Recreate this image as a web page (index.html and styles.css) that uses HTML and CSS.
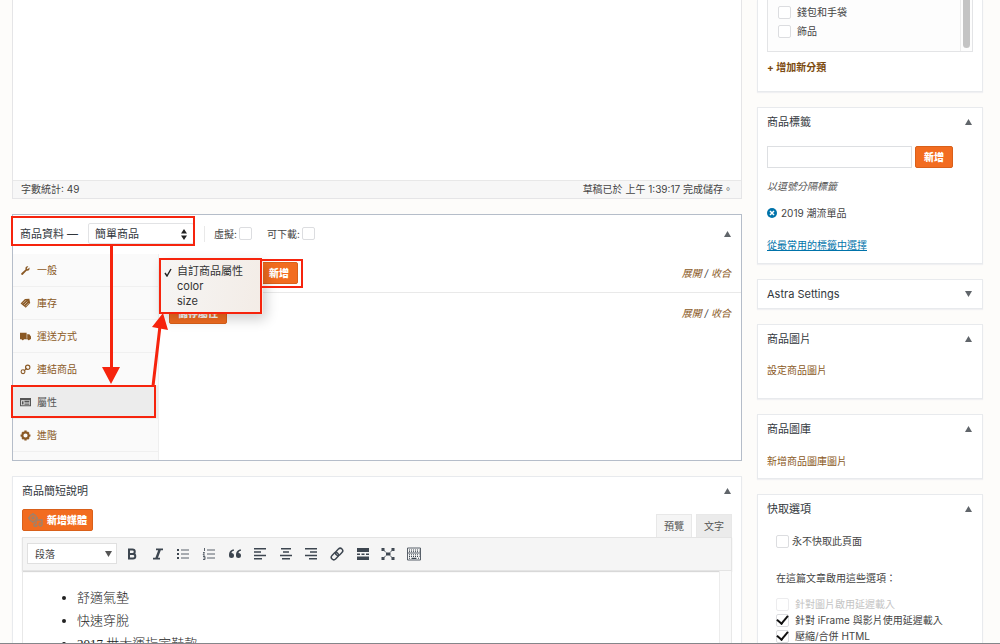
FILE: index.html
```html
<!DOCTYPE html>
<html lang="zh-Hant">
<head>
<meta charset="utf-8">
<meta name="viewport" content="width=device-width, initial-scale=1">
<title>商品資料</title>
<link rel="stylesheet" href="styles.css">
</head>
<body>
<div class="screen">
  <main class="main-column">
    <section class="editor">
      <div class="editor-area"></div>
      <div class="editor-status"><span>字數統計: 49</span><span>草稿已於 上午 1:39:17 完成儲存。</span></div>
    </section>

    <section class="product-data">
      <header class="product-header">
        <label class="product-title" for="product-type">商品資料 —</label>
        <div class="type-picker">
          <select id="product-type" class="type-select"><option>簡單商品</option></select>
          <svg class="type-arrows" viewBox="0 0 6 11"><path d="M3 0 6 4.500H0zM3 11 0 6.500h6z"/></svg>
        </div>
        <div class="type-options">
          <label class="type-option">虛擬:<input class="check" type="checkbox"></label>
          <label class="type-option">可下載:<input class="check" type="checkbox"></label>
        </div>
        <button class="toggle" type="button" aria-label="收合"><svg class="toggle-icon" viewBox="0 0 7 6"><path d="M3.500 0 7 6H0z"/></svg></button>
      </header>
      <div class="product-body">
        <nav class="tabs">
          <a class="tab" href="#"><svg class="tab-icon" viewBox="0 0 20 20"><path d="M17 4.500 14 7.500 12.200 5.700l3-3C12.500 1.600 9 4 10 8L2.500 15.200c-1.500 1.700 1 4 2.500 2.500L12 10.500c4 1 6.500-2.500 5-6z"/></svg>一般</a>
          <a class="tab" href="#"><svg class="tab-icon" viewBox="0 0 20 20"><path d="M1 10 9 2l8-.5L18.500 9l-8 8.500z"/><path class="tab-cut" d="m5 10 6-6M7.500 12.500l6-6M10 15l5.500-5.500"/></svg>庫存</a>
          <a class="tab" href="#"><svg class="tab-icon" viewBox="0 0 20 20"><path d="M0 3h12v3h5l3 4v5h-2a2 2 0 0 1-4 0H7a2 2 0 0 1-4 0H0z"/><path class="tab-cut" d="M12.500 6v8"/></svg>運送方式</a>
          <a class="tab" href="#"><svg class="tab-icon" viewBox="0 0 20 20"><g class="tab-line"><circle cx="14" cy="6" r="4"/><circle cx="5.500" cy="14" r="3.500"/><path d="m7 13 6-6"/></g></svg>連結商品</a>
          <a class="tab tab-active" href="#"><svg class="tab-icon" viewBox="0 0 20 20"><path fill-rule="evenodd" d="M0 2h20v15H0zM2 6v9h16V6z"/><path d="M3.500 7.500h3v6h-3zM8 7h9v2H8zm0 3h9v2H8zm0 3h9v1.500H8z"/></svg>屬性</a>
          <a class="tab" href="#"><svg class="tab-icon" viewBox="0 0 20 20"><path fill-rule="evenodd" d="m8 1h4l.5 2.500 2-1 2.800 2.800-1.200 2.200L19 8v4l-2.700.5 1.200 2.200-2.800 2.800-2.200-1.200L12 19H8l-.5-2.700-2.200 1.200-2.800-2.800 1.200-2.200L1 12V8l2.700-.5-1.200-2.200 2.800-2.800 2.200 1zM10 6.200a3.800 3.800 0 1 0 0 7.600 3.800 3.800 0 0 0 0-7.600z"/></svg>進階</a>
        </nav>
        <div class="attributes">
          <div class="attribute-row attribute-row-top">
            <div class="attribute-picker">
              <ul class="menu" role="listbox">
                <li class="menu-item" role="option" aria-selected="true"><svg class="menu-tick" viewBox="0 0 8 9"><path d="m1 5 2 3 4-7"/></svg>自訂商品屬性</li>
                <li class="menu-item" role="option">color</li>
                <li class="menu-item" role="option">size</li>
              </ul>
            </div>
            <button class="button" type="button">新增</button>
            <span class="expand"><a class="link" href="#">展開</a> / <a class="link" href="#">收合</a></span>
          </div>
          <div class="attribute-row">
            <button class="button" type="button">儲存屬性</button>
            <span class="expand"><a class="link" href="#">展開</a> / <a class="link" href="#">收合</a></span>
          </div>
        </div>
      </div>
      <svg class="callouts" viewBox="8 214 300 208">
        <g class="callout-line">
          <path d="M12 217h182v28H12zM12 386h143v31H12zM160 259h101v54H160zM262 260h40v27h-40"/>
          <path class="callout-shaft" d="M111.500 246v124M153 386l7-60"/>
        </g>
        <path class="callout-head" d="M102 367h18l-9 17zM163 313l5 17-16-3z"/>
      </svg>
    </section>

    <section class="panel excerpt">
      <header class="panel-header"><h2 class="panel-title">商品簡短說明</h2><button class="toggle" type="button" aria-label="收合"><svg class="toggle-icon" viewBox="0 0 7 6"><path d="M3.500 0 7 6H0z"/></svg></button></header>
      <div class="excerpt-body">
        <div class="excerpt-top">
          <button class="button media-button" type="button"><svg class="media-icon" viewBox="0 0 16 14"><g><circle cx="5" cy="5" r="3.500"/><circle cx="5" cy="5" r="1"/><path d="M5 0v2M5 8v2M0 5h2M8 5h2M9 12a1.500 1.500 0 1 1-1-1.500V7h6v4M14 11a1.500 1.500 0 1 1-1-1"/></g></svg>新增媒體</button>
          <div class="modes"><button class="mode mode-active" type="button">預覽</button><button class="mode" type="button">文字</button></div>
        </div>
        <div class="toolbar">
          <div class="format-picker"><select class="format-select" aria-label="格式"><option>段落</option></select><svg class="format-arrow" viewBox="0 0 7 6"><path d="M0 0h7L3.500 6z"/></svg></div>
          <div class="tools">
            <button class="tool" type="button" aria-label="粗體"><svg class="tool-icon" viewBox="0 0 14 14"><path class="tool-stroke" d="M4 2.500h3.500a2.200 2.200 0 0 1 0 4.500H4zm0 4.500h4a2.300 2.300 0 0 1 0 4.600H4z"/></svg></button>
            <button class="tool" type="button" aria-label="斜體"><svg class="tool-icon" viewBox="0 0 14 14"><path d="M5 1.500h7v1.700H9.800L7 10.800h2v1.700H2v-1.700h2.400l2.800-7.600H5z"/></svg></button>
            <button class="tool" type="button" aria-label="項目清單"><svg class="tool-icon" viewBox="0 0 14 14"><path d="M1 2h2v2H1zm0 4h2v2H1zm0 4h2v2H1z"/><path class="tool-thin" d="M5 3h8M5 7h8M5 11h8"/></svg></button>
            <button class="tool" type="button" aria-label="編號清單"><svg class="tool-icon" viewBox="0 0 14 14"><path class="tool-thin" d="M2.500 1v3M1 5.500h1.500L1 8h2M1 9.500h2v3H1M1.500 11H3M5 3h8M5 7h8M5 11h8"/></svg></button>
            <button class="tool" type="button" aria-label="引用"><svg class="tool-icon" viewBox="0 0 14 14"><path d="M6 2.500C2.500 2.500 1 5 1 8.500a2.500 2.500 0 1 0 2.500-2.500C3.600 4.800 4.500 4 6 3.800zM13 2.500c-3.500 0-5 2.500-5 6A2.500 2.500 0 1 0 10.500 6c.1-1.200 1-2 2.500-2.200z"/></svg></button>
            <button class="tool" type="button" aria-label="靠左"><svg class="tool-icon" viewBox="0 0 14 14"><path d="M1 1h12v1.500H1zm0 3.300h7v1.500H1zm0 3.400h12v1.500H1zM1 11h8v1.500H1z"/></svg></button>
            <button class="tool" type="button" aria-label="置中"><svg class="tool-icon" viewBox="0 0 14 14"><path d="M2 1h10v1.500H2zm2 3.300h6v1.500H4zM1 7.700h12v1.500H1zM3 11h8v1.500H3z"/></svg></button>
            <button class="tool" type="button" aria-label="靠右"><svg class="tool-icon" viewBox="0 0 14 14"><path d="M1 1h12v1.500H1zm5 3.300h7v1.500H6zM1 7.700h12v1.500H1zM5 11h8v1.500H5z"/></svg></button>
            <button class="tool" type="button" aria-label="連結"><svg class="tool-icon" viewBox="0 0 14 14"><g class="tool-link" transform="rotate(-45 7 7)"><rect x="0" y="4.500" width="8" height="5" rx="2.500"/><rect x="6" y="4.500" width="8" height="5" rx="2.500"/></g></svg></button>
            <button class="tool" type="button" aria-label="繼續閱讀"><svg class="tool-icon" viewBox="0 0 14 14"><path d="M1 1h12v4H1zm0 8.500h12v3.500H1zM1 6.500h3v1.500H1zm4.500 0h3v1.500h-3zm4.500 0h3v1.500h-3z"/></svg></button>
            <button class="tool" type="button" aria-label="全螢幕"><svg class="tool-icon" viewBox="0 0 14 14"><path d="M5 5.500h4.500v3H5zM.5 1h3v3h-3zm10 0h3v3h-3zm-10 9h3v3h-3zm10 0h3v3h-3z"/><path class="tool-thin" d="m2 2.500 3 3M12 2.500l-3 3M2 11.500l3-3M12 11.500l-3-3"/></svg></button>
            <button class="tool" type="button" aria-label="工具列"><svg class="tool-icon" viewBox="0 0 14 14"><path class="tool-thin" d="M.5 1h13v12H.5zM.5 6h13"/><path class="tool-dots" d="M2 3h10.500M2 4.700h10.500M2 7.800h10.500M2 9.500h10.500"/><path d="M2 10.800h1v1H2zm2.500 0h5v1.200h-5zm6.500 0h1v1h-1z"/></svg></button>
          </div>
        </div>
        <div class="excerpt-content">
          <ul class="excerpt-list"><li>舒適氣墊</li><li>快速穿脫</li><li>2017 世大運指定鞋款</li></ul>
          <div class="scroll-gutter"></div>
        </div>
      </div>
    </section>
  </main>

  <aside class="side-column">
    <section class="panel categories">
      <div class="category-box">
        <div class="category-list">
          <label class="check-row"><input class="check" type="checkbox">錢包和手袋</label>
          <label class="check-row"><input class="check" type="checkbox">飾品</label>
        </div>
        <div class="scroll-track"><div class="scroll-thumb"></div></div>
      </div>
      <a class="link link-strong" href="#">+ 增加新分類</a>
    </section>

    <section class="panel">
      <header class="panel-header"><h2 class="panel-title">商品標籤</h2><button class="toggle" type="button" aria-label="收合"><svg class="toggle-icon" viewBox="0 0 7 6"><path d="M3.500 0 7 6H0z"/></svg></button></header>
      <div class="tags-body">
        <div class="tag-form"><input class="tag-input" type="text" aria-label="新增標籤"><button class="button" type="button">新增</button></div>
        <p class="hint">以逗號分隔標籤</p>
        <div class="tag"><button class="tag-remove" type="button" aria-label="移除"><svg class="tag-icon" viewBox="0 0 10 10"><circle cx="5" cy="5" r="5"/><path d="m3 3 4 4M7 3 3 7"/></svg></button>2019 潮流單品</div>
        <a class="link link-blue" href="#">從最常用的標籤中選擇</a>
      </div>
    </section>

    <section class="panel">
      <header class="panel-header panel-header-closed"><h2 class="panel-title">Astra Settings</h2><button class="toggle" type="button" aria-label="展開"><svg class="toggle-icon" viewBox="0 0 7 6"><path d="M0 0h7L3.500 6z"/></svg></button></header>
    </section>

    <section class="panel">
      <header class="panel-header"><h2 class="panel-title">商品圖片</h2><button class="toggle" type="button" aria-label="收合"><svg class="toggle-icon" viewBox="0 0 7 6"><path d="M3.500 0 7 6H0z"/></svg></button></header>
      <div class="image-body"><a class="link" href="#">設定商品圖片</a></div>
    </section>

    <section class="panel">
      <header class="panel-header"><h2 class="panel-title">商品圖庫</h2><button class="toggle" type="button" aria-label="收合"><svg class="toggle-icon" viewBox="0 0 7 6"><path d="M3.500 0 7 6H0z"/></svg></button></header>
      <div class="gallery-body"><a class="link" href="#">新增商品圖庫圖片</a></div>
    </section>

    <section class="panel">
      <header class="panel-header"><h2 class="panel-title">快取選項</h2><button class="toggle" type="button" aria-label="收合"><svg class="toggle-icon" viewBox="0 0 7 6"><path d="M3.500 0 7 6H0z"/></svg></button></header>
      <div class="cache-body">
        <label class="check-row cache-never"><input class="check" type="checkbox">永不快取此頁面</label>
        <p class="cache-note">在這篇文章啟用這些選項：</p>
        <div class="cache-list">
          <label class="check-row check-row-disabled"><input class="check" type="checkbox" disabled>針對圖片啟用延遲載入</label>
          <label class="check-row"><input class="check" type="checkbox" checked>針對 iFrame 與影片使用延遲載入</label>
          <label class="check-row"><input class="check" type="checkbox" checked>壓縮/合併 HTML</label>
        </div>
      </div>
    </section>
  </aside>
</div>
</body>
</html>
```
FILE: styles.css
```css
* { box-sizing: border-box; }

body {
  margin: 0;
  background: #fdfcfa;
  color: #444;
  font: 10px/16px Inter, "Noto Sans CJK TC", sans-serif;
}

h2, p, ul { margin: 0; padding: 0; }
ul { list-style: none; }
button, input, select { font: inherit; color: inherit; margin: 0; }
button { border: 0; padding: 0; background: none; }
svg { display: block; flex: none; }

.screen {
  display: flex;
  gap: 15px;
  height: 100vh;
  padding: 0 17px 0 12px;
  overflow: hidden;
  border-bottom: 1px solid #84868a;
}

.main-column { flex: 1; min-width: 0; }
.side-column { flex: 0 0 226px; }
.main-column, .side-column { display: flex; flex-direction: column; gap: 15px; }
.main-column > *, .side-column > * { flex: none; }

.editor { border: 1px solid #e5e5e7; border-top: 0; background: #fff; }
.editor-area { min-height: 180px; }
.editor-status {
  display: flex;
  justify-content: space-between;
  padding: 0 8px 1px;
  border-top: 1px solid #e8e8e8;
  background: #f7f7f7;
}

.panel { border: 1px solid #e8eaed; box-shadow: 0 1px 1px #f0f0f2; background: #fff; }
.panel-header { display: flex; align-items: center; justify-content: space-between; padding: 6px 10px 8px 9px; }
.panel-header-closed { padding-bottom: 6px; }
.panel-title { font-size: 11px; font-weight: 400; line-height: 16px; color: #32373c; }
.toggle-icon { width: 7px; height: 6px; fill: #60656a; }
.link { color: #8a5925; text-decoration: none; }
.link-strong { font-weight: 700; color: #7c4b10; }
.link-blue { color: #0073aa; text-decoration: underline; }

.button {
  height: 22px;
  padding: 0 8px;
  border: 1px solid #d9601a;
  border-radius: 2px;
  background: #f26c20;
  color: #fff;
  font-weight: 900;
  line-height: 20px;
}

.check {
  appearance: none;
  display: grid;
  place-items: center;
  flex: none;
  width: 13px;
  height: 13px;
  border: 1px solid #dcdde0;
  border-radius: 2px;
  background: #fff;
}
.check:checked::before {
  content: "";
  width: 9px;
  height: 5px;
  margin-bottom: 3px;
  border: solid #111;
  border-width: 0 0 2px 2px;
  transform: rotate(-50deg);
}
.check:disabled { border-color: #ececee; }
.check-row { display: flex; align-items: center; gap: 6px; }
.check-row-disabled { color: #c4c4c4; }

.product-data { position: relative; border: 1px solid #b5bdc9; background: #fff; }
.product-header { display: flex; align-items: center; height: 39px; padding: 0 10px 2px 7px; }
.product-title { font-size: 11px; color: #32373c; }
.type-picker { position: relative; width: 106px; margin-left: 10px; }
.type-select {
  appearance: none;
  display: block;
  width: 100%;
  height: 21px;
  padding: 0 6px;
  border: 1px solid #e2e3e5;
  border-radius: 2px;
  background: #fff;
  font-size: 11px;
  color: #32373c;
}
.type-arrows { position: absolute; top: 6px; right: 7px; width: 6px; height: 11px; fill: #222; }
.type-options { display: flex; gap: 15px; margin: 0 auto 0 10px; padding-left: 9px; border-left: 1px solid #e9e9e9; }
.type-option { display: flex; align-items: center; gap: 2px; }

.product-body { display: flex; }
.tabs { flex: 0 0 146px; padding-bottom: 8px; border-right: 1px solid #efefef; background: #fafafa; }
.tab {
  display: flex;
  align-items: center;
  gap: 6px;
  height: 33px;
  padding-left: 7px;
  border-bottom: 1px solid #f0f0f0;
  color: #8a5925;
  text-decoration: none;
}
.tab-active { background: #ececec; color: #555; }
.tab-icon { width: 11px; height: 11px; fill: currentColor; }
.tab-cut { fill: none; stroke: #fafafa; stroke-width: 1; }
.tab-line { fill: none; stroke: currentColor; stroke-width: 2; }

.attributes { flex: 1; }
.attribute-row { display: flex; align-items: center; padding: 9px 10px; }
.attribute-row-top { padding: 8px 10px; border-bottom: 1px solid #e9e9e9; }
.attribute-picker { position: relative; flex: 0 0 91px; height: 22px; }
.expand { margin-left: auto; font-style: italic; }

.menu {
  position: absolute;
  top: -3px;
  left: -9px;
  z-index: 1;
  width: 103px;
  padding: 5px 0;
  background: linear-gradient(100deg, #f6f5f4, #f3ece6);
  box-shadow: 3px 5px 12px #00000033;
  font-size: 11px;
  line-height: 15px;
  color: #333;
}
.menu-item { position: relative; padding-left: 17px; }
.menu-tick { position: absolute; top: 4px; left: 4px; width: 8px; height: 9px; fill: none; stroke: #222; stroke-width: 1.400; }

.callouts { position: absolute; top: -1px; left: -5px; z-index: 2; width: 300px; height: 208px; pointer-events: none; }
.callout-line { fill: none; stroke: #f6240d; stroke-width: 2; }
.callout-shaft { stroke-width: 3; }
.callout-head { fill: #f6240d; }

.excerpt-body { padding: 0 9px; }
.excerpt-top { display: flex; align-items: flex-start; justify-content: space-between; }
.excerpt .panel-header { padding-bottom: 10px; }
.media-button { display: flex; align-items: center; gap: 3px; padding: 0 5px; }
.media-icon { width: 16px; height: 14px; fill: none; stroke: #a18068; stroke-width: 1.500; }
.modes { display: flex; gap: 4px; padding-top: 5px; }
.mode { height: 23px; padding: 0 7px; border: 1px solid #e8e8e8; border-bottom: 0; background: #ebebeb; color: #555; }
.mode-active { background: #f5f5f5; }
.toolbar { display: flex; align-items: center; gap: 8px; padding: 5px 4px 6px; border: 1px solid #e4e4e4; background: #f5f5f5; box-shadow: 0 1px 1px #d8d8d8; }
.format-picker { position: relative; width: 90px; }
.format-select { appearance: none; display: block; width: 100%; height: 21px; padding: 0 7px; border: 1px solid #e0e0e0; border-radius: 0; background: #fff; }
.format-arrow { position: absolute; top: 8px; right: 5px; width: 7px; height: 6px; fill: #555; }
.tools { display: flex; justify-content: space-between; width: 296px; }
.tool-icon { width: 14px; height: 14px; fill: #3d4650; }
.tool-stroke { fill: none; stroke: #3d4650; stroke-width: 2; }
.tool-thin { fill: none; stroke: #59616a; stroke-width: 1; }
.tool-link { fill: none; stroke: #3d4650; stroke-width: 1.500; }
.tool-dots { fill: none; stroke: #3d4650; stroke-width: 1; stroke-dasharray: 1 1; }
.excerpt-content { display: flex; justify-content: space-between; border: solid #e8e8e8; border-width: 0 1px; }
.excerpt-list { padding: 15px 0 0 54px; list-style: disc; font: 300 13px/23px "Liberation Serif", "Noto Sans CJK TC", serif; color: #222; }
.scroll-gutter { width: 12px; border-left: 1px solid #ececec; background: #fafafa; }

.categories { padding: 0 9px 16px; border-top: 0; }
.category-box { display: flex; justify-content: space-between; margin-bottom: 7px; border: solid #e3e4e6; border-width: 0 1px 1px; background: #fdfdfd; }
.category-list { display: grid; gap: 3px; padding: 4px 10px 12px; }
.scroll-track { display: flex; width: 12px; padding: 0 2px 3px; border-left: 1px solid #ececec; }
.scroll-thumb { width: 7px; border-radius: 0 0 4px 4px; background: #c4c4c4; }

.tags-body { padding: 8px 9px 10px; }
.tag-form { display: flex; gap: 3px; }
.tag-input { width: 145px; height: 22px; padding: 0 5px; border: 1px solid #dddfe2; background: #fff; }
.hint { padding: 10px 0 11px; font-style: italic; color: #555; }
.tag { display: flex; align-items: center; gap: 4px; margin-bottom: 16px; }
.tag-icon { width: 10px; height: 10px; fill: #0073aa; stroke: #fff; stroke-width: 1.500; }
.tag-icon circle { stroke: none; }

.image-body { padding: 7px 9px 20px; }
.gallery-body { padding: 8px 9px 9px; }
.cache-body { padding: 8px 18px; }
.cache-never { gap: 3px; }
.cache-note { padding: 21px 0 10px; }
```
